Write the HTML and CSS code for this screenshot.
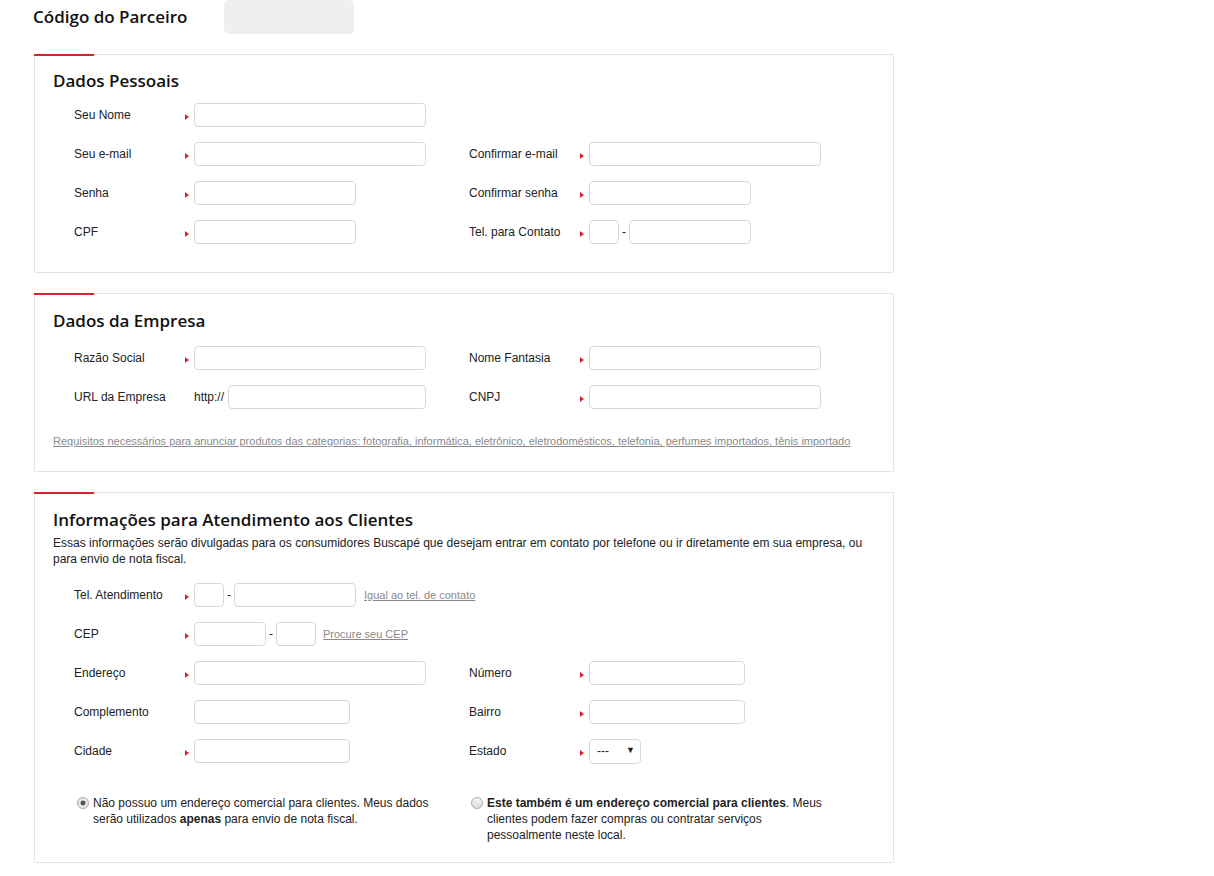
FILE: index.html
```html
<!DOCTYPE html>
<html lang="pt-BR">
<head>
<meta charset="utf-8">
<title>Cadastro de Parceiro</title>
<link rel="stylesheet" href="styles.css">
</head>
<body>
<div class="top">
  <h1 class="top-title">Código do Parceiro</h1>
  <div class="code-box"></div>
</div>

<section class="card card-1">
  <h2 class="card-title">Dados Pessoais</h2>
  <div class="rows">
    <div class="row">
      <div class="field"><label class="lbl">Seu Nome</label><span class="req"></span><input class="inp w232" type="text"></div>
    </div>
    <div class="row">
      <div class="field"><label class="lbl">Seu e-mail</label><span class="req"></span><input class="inp w232" type="text"></div>
      <div class="field"><label class="lbl">Confirmar e-mail</label><span class="req"></span><input class="inp w232" type="text"></div>
    </div>
    <div class="row">
      <div class="field"><label class="lbl">Senha</label><span class="req"></span><input class="inp w162" type="password"></div>
      <div class="field"><label class="lbl">Confirmar senha</label><span class="req"></span><input class="inp w162" type="password"></div>
    </div>
    <div class="row">
      <div class="field"><label class="lbl">CPF</label><span class="req"></span><input class="inp w162" type="text"></div>
      <div class="field"><label class="lbl">Tel. para Contato</label><span class="req"></span><input class="inp w30" type="text"><span class="dash">-</span><input class="inp w122" type="text"></div>
    </div>
  </div>
</section>

<section class="card card-2">
  <h2 class="card-title">Dados da Empresa</h2>
  <div class="rows">
    <div class="row">
      <div class="field"><label class="lbl">Razão Social</label><span class="req"></span><input class="inp w232" type="text"></div>
      <div class="field"><label class="lbl">Nome Fantasia</label><span class="req"></span><input class="inp w232" type="text"></div>
    </div>
    <div class="row">
      <div class="field"><label class="lbl">URL da Empresa</label><span class="noreq"></span><span class="prefix">http://</span><input class="inp w198" type="text"></div>
      <div class="field"><label class="lbl">CNPJ</label><span class="req"></span><input class="inp w232" type="text"></div>
    </div>
  </div>
  <a class="req-link" href="#">Requisitos necessários para anunciar produtos das categorias: fotografia, informática, eletrônico, eletrodomésticos, telefonia, perfumes importados, tênis importado</a>
</section>

<section class="card card-3">
  <h2 class="card-title">Informações para Atendimento aos Clientes</h2>
  <p class="intro">Essas informações serão divulgadas para os consumidores Buscapé que desejam entrar em contato por telefone ou ir diretamente em sua empresa, ou para envio de nota fiscal.</p>
  <div class="rows">
    <div class="row">
      <div class="field"><label class="lbl">Tel. Atendimento</label><span class="req"></span><input class="inp w30" type="text"><span class="dash">-</span><input class="inp w122" type="text"><a class="aux-link aux-tel" href="#">Igual ao tel. de contato</a></div>
    </div>
    <div class="row">
      <div class="field"><label class="lbl">CEP</label><span class="req"></span><input class="inp w72" type="text"><span class="dash">-</span><input class="inp w40" type="text"><a class="aux-link aux-cep" href="#">Procure seu CEP</a></div>
    </div>
    <div class="row">
      <div class="field"><label class="lbl">Endereço</label><span class="req"></span><input class="inp w232" type="text"></div>
      <div class="field"><label class="lbl">Número</label><span class="req"></span><input class="inp w156" type="text"></div>
    </div>
    <div class="row">
      <div class="field"><label class="lbl">Complemento</label><span class="noreq"></span><input class="inp w156" type="text"></div>
      <div class="field"><label class="lbl">Bairro</label><span class="req"></span><input class="inp w156" type="text"></div>
    </div>
    <div class="row">
      <div class="field"><label class="lbl">Cidade</label><span class="req"></span><input class="inp w156" type="text"></div>
      <div class="field"><label class="lbl">Estado</label><span class="req"></span><span class="sel-wrap"><select class="sel"><option>---</option></select></span></div>
    </div>
  </div>
  <div class="options">
    <label class="opt"><input class="radio" type="radio" name="tipo" checked><span class="opt-text">Não possuo um endereço comercial para clientes. Meus dados serão utilizados <b>apenas</b> para envio de nota fiscal.</span></label>
    <label class="opt"><input class="radio" type="radio" name="tipo"><span class="opt-text"><b>Este também é um endereço comercial para clientes</b>. Meus clientes podem fazer compras ou contratar serviços pessoalmente neste local.</span></label>
  </div>
</section>
</body>
</html>
```

FILE: styles.css
```css
html, body {
  margin: 0;
  padding: 0;
  background: #fff;
}

body {
  font-family: "Liberation Sans", Arial, sans-serif;
  font-size: 12px;
  color: #222;
  width: 1214px;
}

.top {
  display: flex;
  align-items: center;
  height: 34px;
  padding-left: 33px;
}

.top-title {
  margin: 0;
  width: 191px;
  font-family: "Open Sans", "Noto Sans", sans-serif;
  font-weight: 600;
  font-size: 17px;
  color: #111;
  line-height: 24px;
}

.code-box {
  width: 130px;
  height: 34px;
  background: #efefef;
  border-radius: 5px;
}

.card {
  position: relative;
  width: 860px;
  box-sizing: border-box;
  margin: 20px 0 0 34px;
  border: 1px solid #e4e4e4;
  border-radius: 2px;
  padding: 14px 18px 28px;
}

.card::before {
  content: "";
  position: absolute;
  top: -1px;
  left: -1px;
  width: 60px;
  height: 2px;
  background: #d9232d;
}

.card-title {
  margin: 0 0 10px;
  font-family: "Open Sans", "Noto Sans", sans-serif;
  font-weight: 600;
  font-size: 17px;
  line-height: 24px;
  color: #111;
}

.rows {
  display: flex;
  flex-direction: column;
  gap: 15px;
}

.row {
  display: grid;
  grid-template-columns: 395px 395px;
  padding-left: 21px;
}

.field {
  display: flex;
  align-items: center;
  height: 24px;
  white-space: nowrap;
}

.lbl {
  width: 111px;
  flex: none;
  color: #222;
  line-height: 16px;
}

.req,
.noreq {
  width: 9px;
  flex: none;
  height: 24px;
  display: flex;
  align-items: center;
}

.req::before {
  content: "";
  display: block;
  margin-top: 3px;
  width: 0;
  height: 0;
  border-left: 4px solid #d9232d;
  border-top: 3px solid transparent;
  border-bottom: 3px solid transparent;
}

.prefix {
  width: 34px;
  flex: none;
  color: #222;
}

.inp {
  box-sizing: border-box;
  height: 24px;
  margin: 0;
  padding: 0 6px;
  border: 1px solid #d8d8d8;
  border-radius: 4px;
  background: #fff;
  font: 12px "Liberation Sans", Arial, sans-serif;
  flex: none;
}

.w232 { width: 232px; }
.w198 { width: 198px; }
.w162 { width: 162px; }
.w156 { width: 156px; }
.w122 { width: 122px; }
.w72 { width: 72px; }
.w40 { width: 40px; }
.w30 { width: 30px; }

.dash {
  width: 10px;
  flex: none;
  text-align: center;
  color: #222;
}

.aux-link {
  color: #8a8a8a;
  font-size: 11px;
  text-decoration: underline;
  white-space: nowrap;
}

.aux-tel { margin-left: 8px; }
.aux-cep { margin-left: 7px; }

.req-link {
  display: block;
  margin-top: 24px;
  color: #8a8a8a;
  font-size: 11px;
  line-height: 16px;
  text-decoration: underline;
}

.card-2 {
  padding-top: 15px;
  padding-bottom: 22px;
}

.card-2 .card-title {
  margin-bottom: 13px;
}

.card-3 {
  padding-top: 15px;
  padding-bottom: 19px;
}

.card-3 .card-title {
  margin-bottom: 3px;
}

.intro {
  margin: 0 0 16px;
  line-height: 16px;
  color: #222;
}

.sel-wrap {
  position: relative;
  display: inline-block;
  width: 52px;
  height: 25px;
}

.sel {
  appearance: none;
  -webkit-appearance: none;
  box-sizing: border-box;
  width: 52px;
  height: 25px;
  margin: 0;
  padding: 0 0 0 7px;
  border: 1px solid #d8d8d8;
  border-radius: 4px;
  background: #fff;
  font: 12px "Liberation Sans", Arial, sans-serif;
  color: #222;
}

.sel-wrap::after {
  content: "▼";
  position: absolute;
  right: 6px;
  top: 6px;
  font-size: 9px;
  color: #222;
  pointer-events: none;
}

.options {
  display: grid;
  grid-template-columns: 394px 1fr;
  margin-top: 32px;
  padding-left: 24px;
}

.opt {
  display: flex;
  align-items: flex-start;
  line-height: 16px;
  color: #222;
}

.radio {
  appearance: none;
  -webkit-appearance: none;
  flex: none;
  width: 12px;
  height: 12px;
  margin: 2px 4px 0 0;
  border: 1px solid #a9a9a9;
  border-radius: 50%;
  background: linear-gradient(#f4f4f4, #dcdcdc);
  box-sizing: border-box;
}

.radio:checked {
  background: radial-gradient(circle, #555 0 2.2px, #e8e8e8 2.8px);
}

.opt-text {
  max-width: 345px;
}

.opt-text b {
  font-weight: bold;
}
```
